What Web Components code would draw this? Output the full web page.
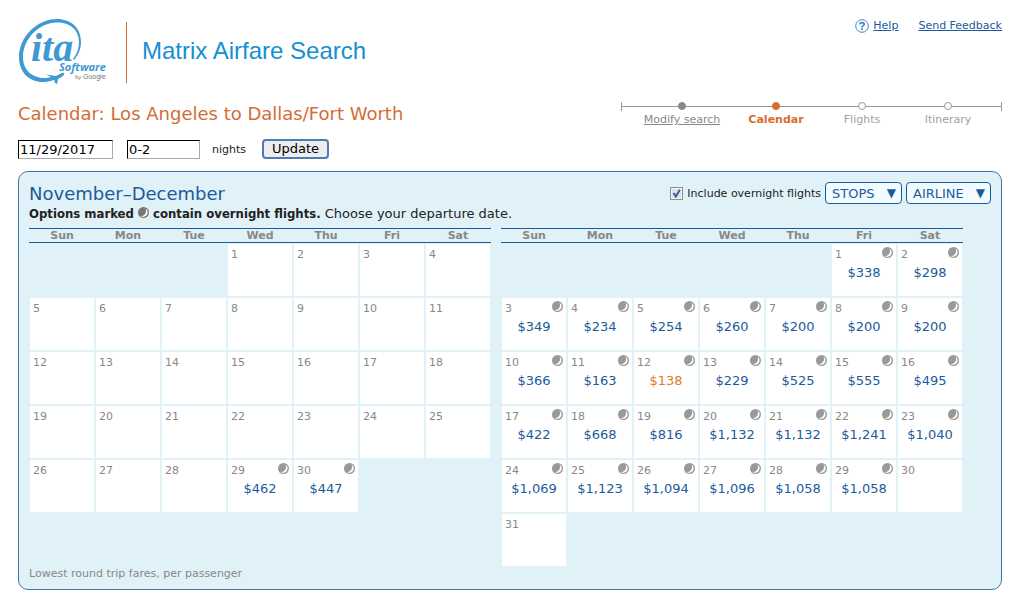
<!DOCTYPE html>
<html lang="en">
<head>
<meta charset="utf-8">
<title>Matrix Airfare Search</title>
<style>
    body {
        margin: 0;
        background: #fff;
        color: #222;
        font-family: Verdana, "DejaVu Sans", sans-serif;
        font-size: 13px;
        --blue: #1b5b9b;
        --orange: #d56c37;
        --grey: #888;
        --panel: #e0f1f8;
    }
</style>
</head>
<body>
<airfare-app></airfare-app>

<script>
class ItaLogo extends HTMLElement {

    constructor() {
        super();
        this.shadow = this.attachShadow({ mode: 'open' });
    }

    connectedCallback() {
        this.shadow.innerHTML =
        /*html*/`
        <style>
            :host{
                display: block;
                width: 90px;
                height: 68px;
            }
            svg{
                display: block;
            }
        </style>
        <svg width="90" height="68" viewBox="18 18 90 68" role="img" aria-label="ITA Software by Google">
            <g fill="#4199d3">
                <path d="M74 60 C79 54 81 48 81 42 C81 28 71 19 57 19 C37 19 19 37 19 57 C19 72 29 82 43 82 C48 82 52 81 56 79 L54 76 C51 77 48 78 45 78 C32 78 23 70 23 57 C23 39 39 22.500 57 22.500 C70 22.500 79 30 79 42 C79 48 77 54 73 59 Z"/>
                <path d="M46 74.500 L56 76 L62 73 Q66 72 63 76 L58 79 L57 84 L55 83 L54 79 L48 80 L52 77.500 Z"/>
                <text x="31" y="61" font-family="Liberation Serif, serif" font-size="40" font-weight="bold" font-style="italic">ita</text>
                <text x="59" y="71" font-family="Open Sans, sans-serif" font-size="11" font-weight="bold" font-style="italic">Software</text>
            </g>
            <text x="75" y="79" font-family="Liberation Sans, sans-serif" font-size="6" fill="#777">by</text>
            <text x="83" y="79" font-family="Liberation Sans, sans-serif" font-size="7" fill="#777">Google</text>
        </svg>
        `
    }
}

customElements.define('ita-logo', ItaLogo);


class MoonIcon extends HTMLElement {

    constructor() {
        super();
        this.shadow = this.attachShadow({ mode: 'open' });
    }

    connectedCallback() {
        this.shadow.innerHTML =
        /*html*/`
        <style>
            :host{
                display: inline-block;
                width: 11px;
                height: 11px;
                color: #999;
            }
            svg{
                display: block;
            }
        </style>
        <svg width="100%" height="100%" viewBox="0 0 10 10" aria-hidden="true">
            <circle cx="5" cy="5" r="5" fill="currentColor"/>
            <path d="M6.800 1.300 A4.100 4.100 0 0 1 2.400 8.300 A4.800 4.800 0 0 0 6.800 1.300Z" fill="#fff"/>
        </svg>
        `
    }
}

customElements.define('moon-icon', MoonIcon);


class HelpLinks extends HTMLElement {

    constructor() {
        super();
        this.shadow = this.attachShadow({ mode: 'open' });
    }

    connectedCallback() {
        this.shadow.innerHTML =
        /*html*/`
        <style>
            :host{
                display: flex;
                align-items: center;
                font-size: 11px;
                line-height: 16px;
            }
            a{
                color: var(--blue);
            }
            svg{
                margin-right: 4px;
            }
            a + a{
                margin-left: 20px;
            }
        </style>
        <svg width="14" height="14" viewBox="0 0 14 14" aria-hidden="true">
            <circle cx="7" cy="7" r="6.3" fill="#fff" stroke="#3f88c0"/>
            <path d="M4.8 5.4 Q4.9 3.6 7 3.6 Q9.2 3.6 9.2 5.2 Q9.2 6.2 8 6.8 Q7 7.3 7 8.4" fill="none" stroke="#3f88c0" stroke-width="1.7"/>
            <rect x="6.1" y="9.3" width="1.8" height="1.7" fill="#3f88c0"/>
        </svg>
        <a href="#help">Help</a>
        <a href="#feedback">Send Feedback</a>
        `
    }
}

customElements.define('help-links', HelpLinks);


class SearchSteps extends HTMLElement {

    constructor() {
        super();
        this.shadow = this.attachShadow({ mode: 'open' });
    }

    connectedCallback() {
        this.shadow.innerHTML =
        /*html*/`
        <style>
            :host{
                display: block;
                font-size: 11px;
                line-height: 14px;
                color: #a0a0a0;
            }
            ol{
                display: grid;
                grid-template-columns: 94px 94px 78px 94px;
                margin: 0;
                padding: 0 6px 0 13px;
                list-style: none;
                border: solid #999;
                border-width: 0 1px;
                /* the rail that the dots sit on */
                background: linear-gradient(#999, #999) 0 4px / 100% 1px no-repeat;
                height: 9px;
            }
            li{
                display: flex;
                flex-direction: column;
                align-items: center;
                gap: 3px;
                white-space: nowrap;
            }
            li::before{
                content: "";
                box-sizing: border-box;
                flex: none;
                width: 8px;
                height: 8px;
                border: 1px solid #999;
                border-radius: 50%;
                background: #fff;
            }
            .done a{
                color: var(--grey);
            }
            .done::before{
                background: #888;
                border-color: #888;
            }
            .current{
                color: #d96d28;
                font-weight: bold;
            }
            .current::before{
                background: #d96d28;
                border-color: #d96d28;
            }
        </style>
        <ol>
            <li class="done"><a href="#search">Modify search</a></li>
            <li class="current" aria-current="step">Calendar</li>
            <li>Flights</li>
            <li>Itinerary</li>
        </ol>
        `
    }
}

customElements.define('search-steps', SearchSteps);


class StayForm extends HTMLElement {

    constructor() {
        super();
        this.shadow = this.attachShadow({ mode: 'open' });
    }

    connectedCallback() {
        this.shadow.innerHTML =
        /*html*/`
        <style>
            :host{
                display: block;
            }
            form{
                display: flex;
                align-items: center;
            }
            input, button{
                box-sizing: border-box;
                font: inherit;
                color: #000;
            }
            input{
                height: 19px;
                padding: 0 1px;
                border: 1px solid;
                border-color: #000 #aaa #aaa #000;
                background: #fff;
            }
            .date{
                width: 95px;
                margin-right: 14px;
            }
            .nights{
                width: 73px;
                margin-right: 12px;
            }
            label{
                font-size: 11px;
                margin-right: 16px;
            }
            button{
                height: 20px;
                padding: 0 8px;
                border: 2px solid #4b7fb4;
                border-radius: 4px;
                background: #eee;
                line-height: 16px;
            }
        </style>
        <form>
            <input class="date" type="text" value="11/29/2017" aria-label="Departure date">
            <input class="nights" id="nights" type="text" value="0-2">
            <label for="nights">nights</label>
            <button type="button">Update</button>
        </form>
        `
    }
}

customElements.define('stay-form', StayForm);


class FilterMenu extends HTMLElement {

    constructor() {
        super();
        this.shadow = this.attachShadow({ mode: 'open' });
    }

    connectedCallback() {
        const label = this.getAttribute('label');

        this.shadow.innerHTML =
        /*html*/`
        <style>
            :host{
                display: grid;
                align-items: center;
                color: var(--blue);
            }
            select, span{
                grid-area: 1 / 1;
            }
            select{
                appearance: none;
                box-sizing: border-box;
                height: 22px;
                margin: 0;
                padding: 0 26px 0 6px;
                border: 1px solid var(--blue);
                border-radius: 4px;
                background: #f2fbff;
                color: inherit;
                font: inherit;
            }
            span{
                justify-self: end;
                margin-right: 6px;
                font-size: 12px;
                pointer-events: none;
            }
        </style>
        <select aria-label="${label}"><option>${label}</option></select>
        <span aria-hidden="true">▼</span>
        `
    }
}

customElements.define('filter-menu', FilterMenu);


const fares = {
    november: {
        start: 3, days: 30,
        prices: { 29: '$462', 30: '$447' }
    },
    december: {
        start: 5, days: 31, lowest: 12,
        prices: {
            1: '$338', 2: '$298',
            3: '$349', 4: '$234', 5: '$254', 6: '$260', 7: '$200', 8: '$200', 9: '$200',
            10: '$366', 11: '$163', 12: '$138', 13: '$229', 14: '$525', 15: '$555', 16: '$495',
            17: '$422', 18: '$668', 19: '$816', 20: '$1,132', 21: '$1,132', 22: '$1,241', 23: '$1,040',
            24: '$1,069', 25: '$1,123', 26: '$1,094', 27: '$1,096', 28: '$1,058', 29: '$1,058'
        }
    }
};

class FareMonth extends HTMLElement {

    constructor() {
        super();
        this.shadow = this.attachShadow({ mode: 'open' });
    }

    connectedCallback() {
        this.month = fares[this.getAttribute('month')];
        this.render()
    }

    cell(day) {
        const { days, prices, lowest } = this.month;

        if (day < 1 || day > days) return '<td></td>';
        if (!prices[day]) return `<td class="day"><div class="top">${day}</div></td>`;

        return `<td class="day">
            <div class="top">${day}<moon-icon></moon-icon></div>
            <a href="#day-${day}" class="${day === lowest ? 'lowest' : ''}">${prices[day]}</a>
        </td>`;
    }

    rows() {
        const { start, days } = this.month;
        let html = '';

        for (let first = 1 - start; first <= days; first += 7) {
            html += '<tr>';
            for (let i = 0; i < 7; i++) html += this.cell(first + i);
            html += '</tr>';
        }
        return html;
    }

    render() {
        const names = ['Sun', 'Mon', 'Tue', 'Wed', 'Thu', 'Fri', 'Sat'];

        this.shadow.innerHTML =
        /*html*/`
        <style>
            :host{
                display: block;
                flex: 0 1 462px;
            }
            table{
                width: 100%;
                table-layout: fixed;
                border-collapse: separate;
                border-spacing: 0;
            }
            th{
                padding: 0;
                border: solid var(--blue);
                border-width: 1px 0;
                color: var(--grey);
                font-size: 11px;
                line-height: 13px;
            }
            td{
                box-sizing: border-box;
                height: 54px;
                padding: 0;
                border: 1px solid var(--panel);
                vertical-align: top;
            }
            .day{
                background: #fff;
            }
            .top{
                display: flex;
                justify-content: space-between;
                padding: 3px 3px 0 3px;
                color: var(--grey);
                font-size: 11px;
                line-height: 15px;
            }
            a{
                display: block;
                margin-top: 2px;
                color: var(--blue);
                line-height: 18px;
                text-align: center;
                text-decoration: none;
            }
            .lowest{
                color: #e07b28;
            }
        </style>
        <table>
            <thead><tr>${names.map(name => `<th scope="col">${name}</th>`).join('')}</tr></thead>
            <tbody>${this.rows()}</tbody>
        </table>
        `
    }
}

customElements.define('fare-month', FareMonth);


class FarePanel extends HTMLElement {

    constructor() {
        super();
        this.shadow = this.attachShadow({ mode: 'open' });
    }

    connectedCallback() {
        this.shadow.innerHTML =
        /*html*/`
        <style>
            :host{
                display: block;
                padding: 10px 10px 8px;
                border: 1px solid #3f77a6;
                border-radius: 10px;
                background: var(--panel);
            }
            .head{
                display: flex;
                justify-content: space-between;
                align-items: flex-start;
            }
            .filters{
                display: flex;
                align-items: center;
                gap: 4px;
            }
            label{
                display: flex;
                align-items: center;
                gap: 4px;
                font-size: 11px;
            }
            input{
                appearance: none;
                box-sizing: border-box;
                width: 13px;
                height: 13px;
                margin: 0;
                border: 1px solid #8a8f94;
                background: #fff;
                outline: 1px solid #f4f4f4;
                outline-offset: -2px;
            }
            input:checked{
                background: #dfe2ea url('data:image/svg+xml,<svg xmlns="http://www.w3.org/2000/svg" viewBox="0 0 11 11"><path d="M2.500 5 L4.800 8.500 L8.800 1.800" fill="none" stroke="%23405a98" stroke-width="2"/></svg>');
            }
            .months{
                display: flex;
                gap: 10px;
                margin-top: 7px;
            }
            .note{
                color: var(--grey);
                font-size: 11px;
                line-height: 14px;
            }
        </style>
        <div class="head">
            <slot name="title"></slot>
            <div class="filters">
                <label><input type="checkbox" checked>Include overnight flights</label>
                <filter-menu label="STOPS"></filter-menu>
                <filter-menu label="AIRLINE"></filter-menu>
            </div>
        </div>
        <div class="months"><slot></slot></div>
        <div class="note"><slot name="note"></slot></div>
        `
    }
}

customElements.define('fare-panel', FarePanel);


class AirfareApp extends HTMLElement {

    constructor() {
        super();
        this.shadow = this.attachShadow({ mode: 'open' });
    }

    connectedCallback() {
        this.shadow.innerHTML =
        /*html*/`
        <style>
            :host{
                display: block;
                padding: 18px 31px 24px 18px;
            }
            h1, h2, h3, p{
                margin: 0;
                font-weight: normal;
            }
            header{
                display: flex;
                align-items: flex-start;
            }
            h1{
                flex: 1;
                margin: 4px 0 0 18px;
                padding: 0 0 4px 15px;
                border-left: 1px solid var(--orange);
                color: #168fd3;
                font: 24px/57px Arial, "Liberation Sans", sans-serif;
            }
            .route{
                display: flex;
                justify-content: space-between;
                align-items: flex-start;
                margin-top: 16px;
            }
            h2{
                color: var(--orange);
                font-size: 18px;
                line-height: 24px;
            }
            stay-form{
                margin-top: 13px;
            }
            fare-panel{
                margin-top: 12px;
            }
            h3{
                color: var(--blue);
                font-size: 18px;
                line-height: 24px;
            }
            p{
                line-height: 15px;
            }
            b{
                font-family: Tahoma, "DejaVu Sans Condensed", sans-serif;
            }
            p moon-icon{
                color: #777;
            }
        </style>
        <header>
            <ita-logo></ita-logo>
            <h1>Matrix Airfare Search</h1>
            <help-links></help-links>
        </header>
        <div class="route">
            <h2>Calendar: Los Angeles to Dallas/Fort Worth</h2>
            <search-steps></search-steps>
        </div>
        <stay-form></stay-form>
        <fare-panel>
            <div slot="title">
                <h3>November–December</h3>
                <p><b>Options marked <moon-icon></moon-icon> contain overnight flights.</b> Choose your departure date.</p>
            </div>
            <fare-month month="november"></fare-month>
            <fare-month month="december"></fare-month>
            <span slot="note">Lowest round trip fares, per passenger</span>
        </fare-panel>
        `
    }
}

customElements.define('airfare-app', AirfareApp);
</script>
</body>
</html>
